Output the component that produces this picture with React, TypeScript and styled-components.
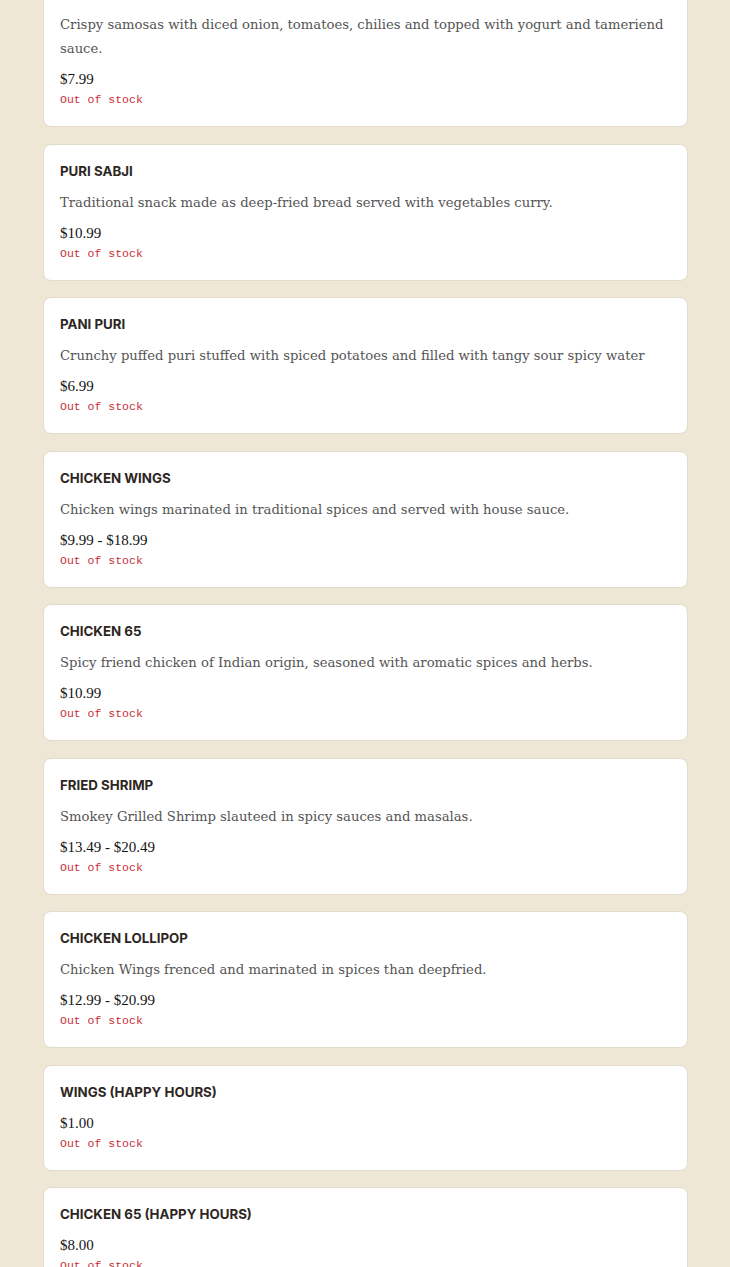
import React, { FC } from 'react';
import styled, { createGlobalStyle } from 'styled-components';

const GlobalStyle = createGlobalStyle`
  html, body {
    margin: 0;
    padding: 0;
    background-color: #efe7d6;
  }
`;

const MenuList = styled.div`
  display: flex;
  flex-direction: column;
  gap: 16.5px;
  margin-top: -34px;
  padding: 0 42px 40px 43px;
`;

const ItemCard = styled.div`
  background-color: #ffffff;
  border: 1px solid #e2dccf;
  border-radius: 8px;
  padding: 16px 16px 17px;
  display: flex;
  flex-direction: column;
`;

const ItemName = styled.div`
  font-family: Inter, 'Noto Sans', sans-serif;
  font-weight: 700;
  font-size: 13.3px;
  line-height: 20px;
  color: #2e2622;
  margin-bottom: 10px;
`;

const ItemDescription = styled.div`
  font-family: 'DejaVu Serif', 'Liberation Serif', serif;
  font-size: 13.2px;
  line-height: 24px;
  color: #555555;
  margin-bottom: 7px;
`;

const ItemPrice = styled.div`
  font-family: 'Liberation Serif', serif;
  font-size: 15px;
  line-height: 23px;
  color: #151515;
`;

const StockLabel = styled.div`
  font-family: 'Liberation Mono', 'DejaVu Sans Mono', monospace;
  font-size: 11.5px;
  line-height: 18px;
  color: #c62f3a;
`;

type MenuItem = {
  name: string;
  description?: string;
  price: string;
};

const items: MenuItem[] = [
  {
    name: 'SAMOSA CHAAT',
    description:
      'Crispy samosas with diced onion, tomatoes, chilies and topped with yogurt and tameriend sauce.',
    price: '$7.99',
  },
  {
    name: 'PURI SABJI',
    description: 'Traditional snack made as deep-fried bread served with vegetables curry.',
    price: '$10.99',
  },
  {
    name: 'PANI PURI',
    description: 'Crunchy puffed puri stuffed with spiced potatoes and filled with tangy sour spicy water',
    price: '$6.99',
  },
  {
    name: 'CHICKEN WINGS',
    description: 'Chicken wings marinated in traditional spices and served with house sauce.',
    price: '$9.99 - $18.99',
  },
  {
    name: 'CHICKEN 65',
    description: 'Spicy friend chicken of Indian origin, seasoned with aromatic spices and herbs.',
    price: '$10.99',
  },
  {
    name: 'FRIED SHRIMP',
    description: 'Smokey Grilled Shrimp slauteed in spicy sauces and masalas.',
    price: '$13.49 - $20.49',
  },
  {
    name: 'CHICKEN LOLLIPOP',
    description: 'Chicken Wings frenced and marinated in spices than deepfried.',
    price: '$12.99 - $20.99',
  },
  { name: 'WINGS (HAPPY HOURS)', price: '$1.00' },
  { name: 'CHICKEN 65 (HAPPY HOURS)', price: '$8.00' },
];

const App: FC = () => (
  <>
    <GlobalStyle />
    <MenuList>
      {items.map(item => (
        <ItemCard key={item.name}>
          <ItemName>{item.name}</ItemName>
          {item.description && <ItemDescription>{item.description}</ItemDescription>}
          <ItemPrice>{item.price}</ItemPrice>
          <StockLabel>Out of stock</StockLabel>
        </ItemCard>
      ))}
    </MenuList>
  </>
);

export default App;
